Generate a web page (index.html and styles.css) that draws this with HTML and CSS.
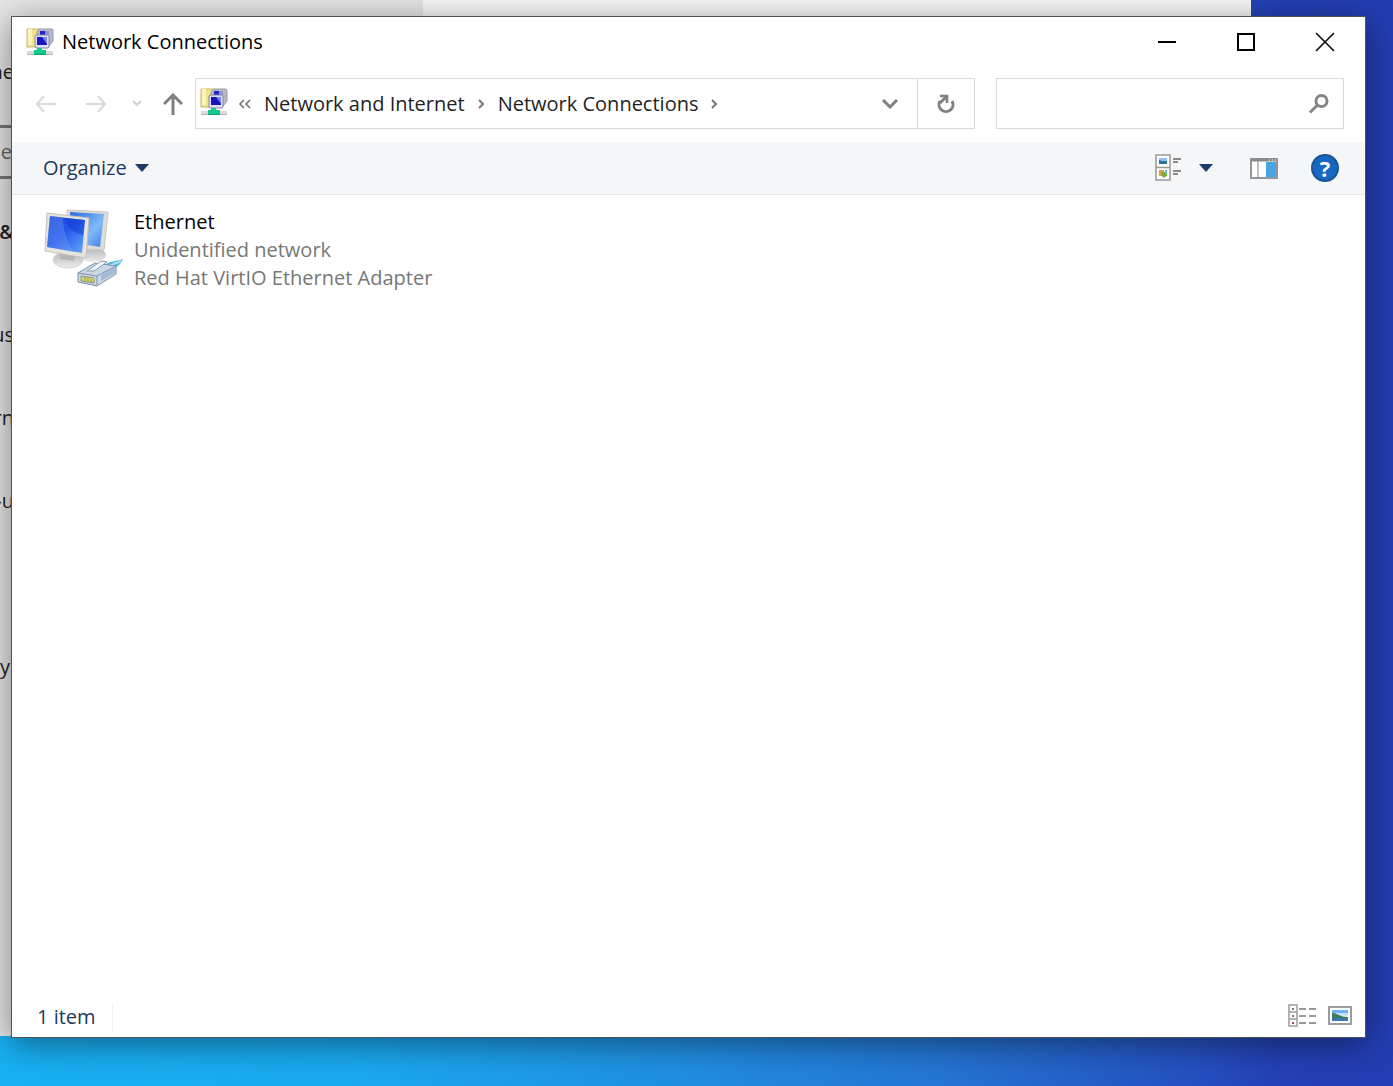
FILE: index.html
```html
<!DOCTYPE html>
<html lang="en">
<head>
  <meta charset="UTF-8">
  <meta name="viewport" content="width=device-width, initial-scale=1.0">
  <title>Network Connections</title>
  <link rel="stylesheet" href="styles.css">
</head>
<body>

  <!-- shared icons -->
  <svg class="sprite" width="0" height="0" aria-hidden="true">
    <symbol id="icon-network" viewBox="0 0 28 28">
      <path d="M1 1h12v18H1z" fill="#f1e28a" stroke="#cdb95f"/>
      <path d="M2 1h4v16H2z" fill="#fbf5bd"/>
      <path d="M13 1h13l1 1v11l-4 5H11V4z" fill="#b4b9c4" stroke="#989da8"/>
      <path d="M14 3h5v5h-5z" fill="#2521c4"/>
      <path d="M19 3h4v5h-4z" fill="#8b95cf"/>
      <path d="M10 7h12l1 1v11l-1 1H10l-1-1V8z" fill="#dde0f0" stroke="#8085b0"/>
      <path d="M11 9h10v8H11z" fill="#1814c0"/>
      <path d="M16 9h5v7z" fill="#7683ea"/>
      <path d="M1 23h26v4H1z" fill="#d5dadd"/>
      <path d="M1 26h26v1H1z" fill="#b4bbbf"/>
      <path d="M11 20h5v2h4v5H8v-5h3z" fill="#14c98a"/>
      <path d="M8 26h12v1H8z" fill="#0a9c66"/>
    </symbol>
    <symbol id="icon-crumb" viewBox="0 0 9 12">
      <path d="M2 2l4 4-4 4" fill="none" stroke="#777" stroke-width="2"/>
    </symbol>
  </svg>

  <!-- settings window in the back -->
  <div class="settings">
    <div class="settings-nav">
      <span class="nav-home">ne</span>
      <span class="nav-search">e</span>
      <span class="nav-title">&amp;</span>
      <span class="nav-item nav-first">us</span>
      <span class="nav-item">rn</span>
      <span class="nav-item">-u</span>
      <span class="nav-item nav-last">y</span>
    </div>
  </div>

  <!-- main window -->
  <main class="window">
    <header class="titlebar">
      <svg class="app-icon" width="28" height="28"><use href="#icon-network"/></svg>
      <h1>Network Connections</h1>
      <div class="controls">
        <button type="button" aria-label="Minimize">
          <svg width="18" height="18" viewBox="0 0 18 18"><path d="M0 9h18" stroke="#000" stroke-width="2"/></svg>
        </button>
        <button type="button" aria-label="Maximize">
          <svg width="18" height="18" viewBox="0 0 18 18"><path d="M1 1h16v16H1z" fill="none" stroke="#000" stroke-width="2"/></svg>
        </button>
        <button type="button" aria-label="Close">
          <svg width="20" height="20" viewBox="0 0 20 20"><path d="M1 1l18 18M19 1L1 19" stroke="#111" stroke-width="1.7"/></svg>
        </button>
      </div>
    </header>

    <div class="navbar">
      <div class="history">
        <button type="button" class="nav-btn" aria-label="Back">
          <svg width="22" height="18" viewBox="0 0 22 18"><path d="M9 1L2 9l7 8M2 9h19" fill="none" stroke="#d9d9d9" stroke-width="2"/></svg>
        </button>
        <button type="button" class="nav-btn" aria-label="Forward">
          <svg width="22" height="18" viewBox="0 0 22 18"><path d="M13 1l7 8-7 8M20 9H1" fill="none" stroke="#d9d9d9" stroke-width="2"/></svg>
        </button>
        <button type="button" class="nav-btn small" aria-label="Recent locations">
          <svg width="10" height="8" viewBox="0 0 10 8"><path d="M1 1l4 4 4-4" fill="none" stroke="#d0d0d0" stroke-width="2"/></svg>
        </button>
        <button type="button" class="nav-btn up" aria-label="Up">
          <svg width="20" height="22" viewBox="0 0 20 22"><path d="M1 11l9-9 9 9M10 2v20" fill="none" stroke="#808080" stroke-width="3"/></svg>
        </button>
      </div>

      <div class="address">
        <svg class="address-icon" width="28" height="28"><use href="#icon-network"/></svg>
        <svg class="more" width="14" height="12" viewBox="0 0 14 12"><path d="M6 2L2 6l4 4M12 2L8 6l4 4" fill="none" stroke="#707070" stroke-width="1.6"/></svg>
        <nav class="crumbs" aria-label="Address">
          <a href="#">Network and Internet</a>
          <svg width="9" height="12"><use href="#icon-crumb"/></svg>
          <a href="#">Network Connections</a>
          <svg width="9" height="12"><use href="#icon-crumb"/></svg>
        </nav>
        <button type="button" class="address-btn" aria-label="Previous locations">
          <svg width="16" height="10" viewBox="0 0 16 10"><path d="M1 1l7 7 7-7" fill="none" stroke="#808080" stroke-width="3"/></svg>
        </button>
        <button type="button" class="address-btn refresh" aria-label="Refresh">
          <svg width="20" height="22" viewBox="0 0 20 22">
            <path d="M4 8A7 7 0 1 0 16 8" fill="none" stroke="#808080" stroke-width="3"/>
            <path d="M4 3h7v7" fill="none" stroke="#808080" stroke-width="2.600"/>
            <path d="M11 3L4 10" stroke="#808080" stroke-width="3"/>
          </svg>
        </button>
      </div>

      <form class="search">
        <input type="search" aria-label="Search Network Connections">
        <button type="button" aria-label="Search">
          <svg width="22" height="22" viewBox="0 0 22 22"><circle cx="13.500" cy="8" r="5.500" fill="none" stroke="#858585" stroke-width="3"/><path d="M9.500 12L2 19.500" stroke="#858585" stroke-width="3"/></svg>
        </button>
      </form>
    </div>

    <div class="toolbar">
      <button type="button" class="organize">
        Organize
        <svg width="14" height="8" viewBox="0 0 14 8"><path d="M0 0h14L7 8z" fill="#1e3a6b"/></svg>
      </button>
      <div class="tools">
        <button type="button" aria-label="Change your view">
          <svg width="27" height="28" viewBox="0 0 27 28">
            <path d="M1 1h14v25H1zM1 13.500h14" fill="#fff" stroke="#999" stroke-width="1.500"/>
            <path d="M4 4h8v3H4z" fill="#8fc1f5"/><path d="M4 7h8v3H4z" fill="#2f7388"/><path d="M4 6l3 1v3H4z" fill="#3c67c9"/>
            <path d="M4 16h5v6H4z" fill="#e2a13e"/><path d="M6 18h6v4l-4 2z" fill="#76ae45"/><path d="M10 16h2v3h-2z" fill="#6caee8"/>
            <path d="M18 5h8M18 8h5M18 17h8M18 20h5" stroke="#666" stroke-width="1.500"/>
          </svg>
        </button>
        <button type="button" aria-label="More view options">
          <svg width="14" height="8" viewBox="0 0 14 8"><path d="M0 0h14L7 8z" fill="#1e3a6b"/></svg>
        </button>
        <button type="button" class="pane" aria-label="Show the preview pane">
          <svg width="28" height="21" viewBox="0 0 28 21">
            <path d="M1 1h26v19H1z" fill="#fff" stroke="#92979b" stroke-width="2"/>
            <path d="M1 2h26" stroke="#85898d" stroke-width="3"/>
            <path d="M8 3v16" stroke="#999" stroke-width="1.200"/>
            <path d="M16 4h10v15H16z" fill="#49a4e6"/>
            <path d="M19 2h1M22 2h1M25 2h1" stroke="#fff" stroke-width="1"/>
          </svg>
        </button>
        <button type="button" class="help" aria-label="Get help">?</button>
      </div>
    </div>

    <section class="content">
      <a href="#" class="adapter">
        <svg width="82" height="84" viewBox="0 0 82 84">
          <defs>
            <linearGradient id="screen" x1="0" y1="0" x2="1" y2="1">
              <stop offset="0" stop-color="#1743d4"/>
              <stop offset=".45" stop-color="#2458ea"/>
              <stop offset="1" stop-color="#69a8f8"/>
            </linearGradient>
            <linearGradient id="screen-back" x1="0" y1="0" x2="1" y2="1">
              <stop offset="0" stop-color="#2c69e0"/>
              <stop offset=".6" stop-color="#80b9f8"/>
              <stop offset="1" stop-color="#3d7fe6"/>
            </linearGradient>
            <linearGradient id="stand" x1="0" y1="0" x2="0" y2="1">
              <stop offset="0" stop-color="#b5b5b5"/>
              <stop offset="1" stop-color="#ededed"/>
            </linearGradient>
          </defs>
          <!-- back screen -->
          <ellipse cx="50" cy="49" rx="14" ry="7" fill="url(#stand)"/>
          <path d="M25 4l41 2-4 38-37-2z" fill="#dddcd6" stroke="#c8c7c1"/>
          <path d="M28 6l34 2-4 33-30-5z" fill="url(#screen-back)"/>
          <!-- front screen -->
          <ellipse cx="26" cy="54" rx="15" ry="8" fill="url(#stand)" stroke="#d5d5d5"/>
          <path d="M20 42l14 3-2 10-14-2z" fill="#b5b4b1"/>
          <path d="M5 7l42 5-3 40-41-7z" fill="#e5e4df" stroke="#c3c2bc"/>
          <path d="M8 10l35 4-3 33-35-6z" fill="url(#screen)"/>
          <path d="M8 10l13 2c0 12 4 22 10 34L5 41z" fill="#7aa3f7" opacity=".35"/>
          <path d="M22 12l21 2-2 15c-9-2-16-7-19-17z" fill="#0f38cf" opacity=".5"/>
          <!-- cable plug -->
          <path d="M62 60c6-6 11-4 19-7-2 5-6 9-15 12z" fill="#51b9dc"/>
          <path d="M66 61c5-4 8-3 13-6" fill="none" stroke="#b4e5f5" stroke-width="2"/>
          <path d="M36 67l17-10 21 3v8l-19 12-19-4z" fill="#c9d7e7" stroke="#7e91af"/>
          <path d="M36 67l19 3 19-10" fill="none" stroke="#7e91af"/>
          <path d="M55 70v9" stroke="#7e91af"/>
          <path d="M45 65l14-10 6 1-13 9z" fill="#f0f5fa" stroke="#8798b3"/>
          <path d="M59 69l14-8v6l-14 8z" fill="#a3bad6"/>
          <path d="M39 70l13 2v5l-13-2z" fill="#d7d878" stroke="#8c967f"/>
          <path d="M43 71v4M46 72v4M49 73v4" stroke="#92973f"/>
        </svg>
        <span class="adapter-text">
          <span class="adapter-name">Ethernet</span>
          <span>Unidentified network</span>
          <span>Red Hat VirtIO Ethernet Adapter</span>
        </span>
      </a>
    </section>

    <footer class="statusbar">
      <span class="count">1 item</span>
      <div class="views">
        <button type="button" aria-label="Details view">
          <svg width="28" height="23" viewBox="0 0 28 23">
            <path d="M1 1h8v21H1zM1 8h8M1 15h8" fill="#fff" stroke="#999ca1" stroke-width="1.500"/>
            <path d="M4 4h2v2H4zM4 11h2v2H4z" fill="#777b85"/><path d="M4 18h2v2H4z" fill="#c0444e"/>
            <path d="M11 5h7M21 5h7M11 12h7M21 12h7M11 19h7M21 19h7" stroke="#777" stroke-width="1.500"/>
          </svg>
        </button>
        <button type="button" aria-label="Large icons view">
          <svg width="24" height="19" viewBox="0 0 24 19">
            <path d="M1 1h22v17H1z" fill="#fff" stroke="#999ca1" stroke-width="2"/>
            <path d="M4 4h16v6H4z" fill="#72b1f5"/><path d="M8 7h12v3H8z" fill="#c8e4fa"/>
            <path d="M4 7c5 0 8 4 16 4v4H4z" fill="#387b62"/><path d="M4 13c6-2 10-1 16-1v3H4z" fill="#3d75af"/>
          </svg>
        </button>
      </div>
    </footer>
  </main>

</body>
</html>
```

FILE: styles.css
```css
:root{
  --text: #1f1f1f;
  --grey-text: #777;
  --navy: #1e395b;
  --line: #d9d9d9;
  --toolbar: #f4f6f8;
}
* {
  box-sizing: border-box;
}
body{
  margin: 0;
  min-height: 100vh;
  position: relative;
  overflow: hidden;
  font-family: "Open Sans", "Noto Sans", sans-serif;
  font-size: 20px;
  line-height: 28px;
  color: var(--text);
  background: linear-gradient(90deg, #18b0f3 0%, #1aaaf0 25%, #2090e2 48%, #2474d3 68%, #2450c0 86%, #2440b5 92%, #233db2 100%);
}
button{
  display: flex;
  align-items: center;
  justify-content: center;
  padding: 0;
  border: none;
  background: none;
  font: inherit;
  color: inherit;
}
a{
  color: inherit;
  text-decoration: none;
}
svg{
  display: block;
  flex-shrink: 0;
}
.sprite{
  position: absolute;
}

/* settings window */
.settings{
  position: absolute;
  inset: 0 142px 50px 0;
  background-color: #f9f9f9;
}
.settings-nav{
  display: flex;
  flex-direction: column;
  width: 423px;
  height: 100%;
  padding-top: 58px;
  background-color: #e6e6e6;
}
.settings-nav span{
  display: flex;
  justify-content: flex-end;
  width: 14px;
  white-space: nowrap;
}
.nav-search{
  margin-top: 39px;
  padding: 10px 2px 10px 0;
  border: 3px solid #777;
  border-width: 3px 0;
  color: #666;
}
.nav-title{
  margin-top: 39px;
  font-weight: 600;
}
.nav-first{
  margin-top: 75px;
}
.nav-item + .nav-item{
  margin-top: 55px;
}
.nav-item + .nav-last{
  margin-top: 138px;
  padding-right: 4px;
}

/* main window */
.window{
  position: absolute;
  inset: 16px 27px 48px 11px;
  display: flex;
  flex-direction: column;
  background-color: #fff;
  border: 1px solid #4f5357;
  box-shadow: 0 6px 32px rgba(0, 0, 0, 0.45);
}
.titlebar{
  display: flex;
  align-items: center;
  height: 52px;
  padding: 0 1px 2px 14px;
}
.titlebar h1{
  flex: 1;
  margin: 0 0 0 8px;
  font-size: 20px;
  font-weight: 400;
  color: #000;
}
.controls{
  display: flex;
  height: 100%;
}
.controls button{
  width: 79px;
}

/* navigation */
.navbar{
  display: flex;
  padding: 9px 21px 13px 9px;
}
.history{
  display: flex;
  margin-right: 2px;
}
.nav-btn{
  width: 50px;
}
.nav-btn.small{
  width: 32px;
}
.nav-btn.up{
  width: 40px;
}
.address{
  display: flex;
  align-items: center;
  flex: 780;
  height: 51px;
  border: 1px solid var(--line);
}
.address-icon{
  margin: 0 10px 4px 4px;
}
.more{
  margin-right: 12px;
}
.crumbs{
  display: flex;
  align-items: center;
  flex: 1;
  white-space: nowrap;
}
.crumbs svg{
  margin: 0 12px;
}
.address-btn{
  width: 54px;
  height: 100%;
}
.refresh{
  width: 57px;
  border-left: 1px solid var(--line);
}
.search{
  display: flex;
  flex: 347;
  margin-left: 21px;
  border: 1px solid var(--line);
}
.search input{
  flex: 1;
  min-width: 0;
  border: none;
  outline: none;
  background: none;
  font: inherit;
}
.search button{
  width: 48px;
}

/* toolbar */
.toolbar{
  display: flex;
  align-items: center;
  justify-content: space-between;
  height: 53px;
  padding: 0 26px 0 31px;
  background-color: var(--toolbar);
  border-bottom: 1px solid #e6eaee;
  color: var(--navy);
}
.organize{
  gap: 8px;
}
.tools{
  display: flex;
  align-items: center;
  gap: 17px;
}
.pane{
  margin: 0 16px 0 20px;
}
.help{
  width: 28px;
  height: 28px;
  border: 2px solid #1c5593;
  border-radius: 50%;
  background-color: #1767c2;
  color: #fff;
  font-size: 22px;
  font-weight: 700;
  line-height: 24px;
}

/* files */
.content{
  flex: 1;
  padding: 11px 30px;
}
.adapter{
  display: inline-flex;
  gap: 10px;
}
.adapter-text{
  display: flex;
  flex-direction: column;
  padding-top: 2px;
  color: var(--grey-text);
}
.adapter-name{
  color: #000;
}
.statusbar{
  display: flex;
  align-items: center;
  justify-content: space-between;
  height: 40px;
  padding: 0 13px 0 25px;
  color: var(--navy);
}
.count{
  padding-right: 16px;
  border-right: 1px solid #f0f0f0;
}
.views{
  display: flex;
  align-items: center;
  gap: 12px;
  padding-bottom: 4px;
}
```
